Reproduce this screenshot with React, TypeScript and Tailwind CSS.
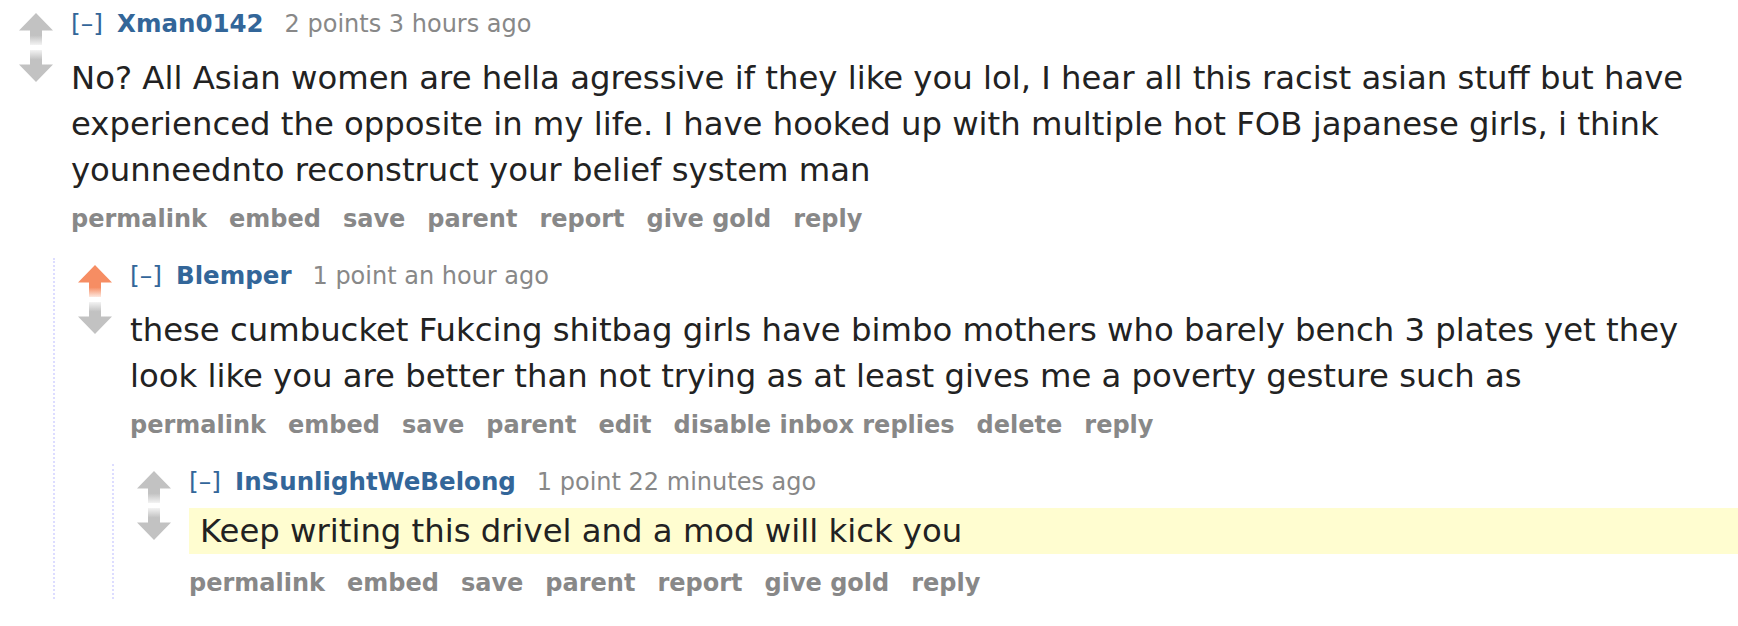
import React, { useId } from 'react';

type Vote = 'up' | 'none';

type CommentData = {
  author: string;
  tagline: string;
  body: string;
  buttons: string[];
  vote?: Vote;
  highlight?: boolean;
  replies?: CommentData[];
};

const thread: CommentData = {
  author: 'Xman0142',
  tagline: '2 points 3 hours ago',
  body: 'No? All Asian women are hella agressive if they like you lol, I hear all this racist asian stuff but have experienced the opposite in my life. I have hooked up with multiple hot FOB japanese girls, i think younneednto reconstruct your belief system man',
  buttons: ['permalink', 'embed', 'save', 'parent', 'report', 'give gold', 'reply'],
  replies: [
    {
      author: 'Blemper',
      tagline: '1 point an hour ago',
      vote: 'up',
      body: 'these cumbucket Fukcing shitbag girls have bimbo mothers who barely bench 3 plates yet they look like you are better than not trying as at least gives me a poverty gesture such as',
      buttons: ['permalink', 'embed', 'save', 'parent', 'edit', 'disable inbox replies', 'delete', 'reply'],
      replies: [
        {
          author: 'InSunlightWeBelong',
          tagline: '1 point 22 minutes ago',
          highlight: true,
          body: 'Keep writing this drivel and a mod will kick you',
          buttons: ['permalink', 'embed', 'save', 'parent', 'report', 'give gold', 'reply'],
        },
      ],
    },
  ],
};

const Arrow = ({ dir, color }: { dir: 'up' | 'down'; color: string }) => {
  const id = useId().replace(/:/g, '');
  const up = dir === 'up';
  return (
    <svg width="34" height="32" viewBox="0 0 34 32" className="block">
      <defs>
        <linearGradient id={id} x1="0" y1="0" x2="0" y2="32" gradientUnits="userSpaceOnUse">
          {up ? (
            <>
              <stop offset="0" stopColor={color} stopOpacity="1" />
              <stop offset="0.7" stopColor={color} stopOpacity="1" />
              <stop offset="1" stopColor={color} stopOpacity="0.2" />
            </>
          ) : (
            <>
              <stop offset="0" stopColor={color} stopOpacity="0.2" />
              <stop offset="0.3" stopColor={color} stopOpacity="1" />
              <stop offset="1" stopColor={color} stopOpacity="1" />
            </>
          )}
        </linearGradient>
      </defs>
      {up ? (
        <path d="M17 0 L34 17.5 L23 17.5 L23 32 L11 32 L11 17.5 L0 17.5 Z" fill={`url(#${id})`} />
      ) : (
        <path d="M11 0 L23 0 L23 14.5 L34 14.5 L17 32 L0 14.5 L11 14.5 Z" fill={`url(#${id})`} />
      )}
    </svg>
  );
};

const Comment = ({ c }: { c: CommentData }) => (
  <div>
    <div className="flex">
      {/* vote arrows */}
      <div className="mt-[5px] flex w-[34px] shrink-0 flex-col gap-[5px]">
        <Arrow dir="up" color={c.vote === 'up' ? '#f68d63' : '#c2c2c2'} />
        <Arrow dir="down" color="#c2c2c2" />
      </div>

      <div className="ml-[18px] min-w-0 flex-1">
        <p className="flex items-baseline text-[24px] leading-[32px] whitespace-nowrap">
          <span className="text-[25px] text-[#369]">[–]</span>
          <span className="ml-[14px] text-[24.5px] font-bold text-[#369]">{c.author}</span>
          <span className="ml-[21px] text-[#888]">{c.tagline}</span>
        </p>

        {c.highlight ? (
          <div className="mt-[10px] bg-[#fffdd0] pl-[11px] text-[32.3px] leading-[46px] text-[#222]">{c.body}</div>
        ) : (
          <div className="mt-[15px] text-[32.3px] leading-[46px] text-[#222]">{c.body}</div>
        )}

        <ul className={`${c.highlight ? 'mt-[13px]' : 'mt-[10px]'} flex gap-x-[22px] text-[24px] leading-[32px] font-bold text-[#888]`}>
          {c.buttons.map((b) => (
            <li key={b}>{b}</li>
          ))}
        </ul>
      </div>
    </div>

    {c.replies && (
      <div className="mt-[23px] ml-[34px] border-l-2 border-dotted border-[#ddf] pt-[2px] pl-[23px]">
        {c.replies.map((r) => (
          <Comment key={r.author} c={r} />
        ))}
      </div>
    )}
  </div>
);

export default function App() {
  return (
    <div className="min-h-[626px] bg-white pt-[8px] pl-[19px] font-['DejaVu_Sans',sans-serif]">
      <Comment c={thread} />
    </div>
  );
}
